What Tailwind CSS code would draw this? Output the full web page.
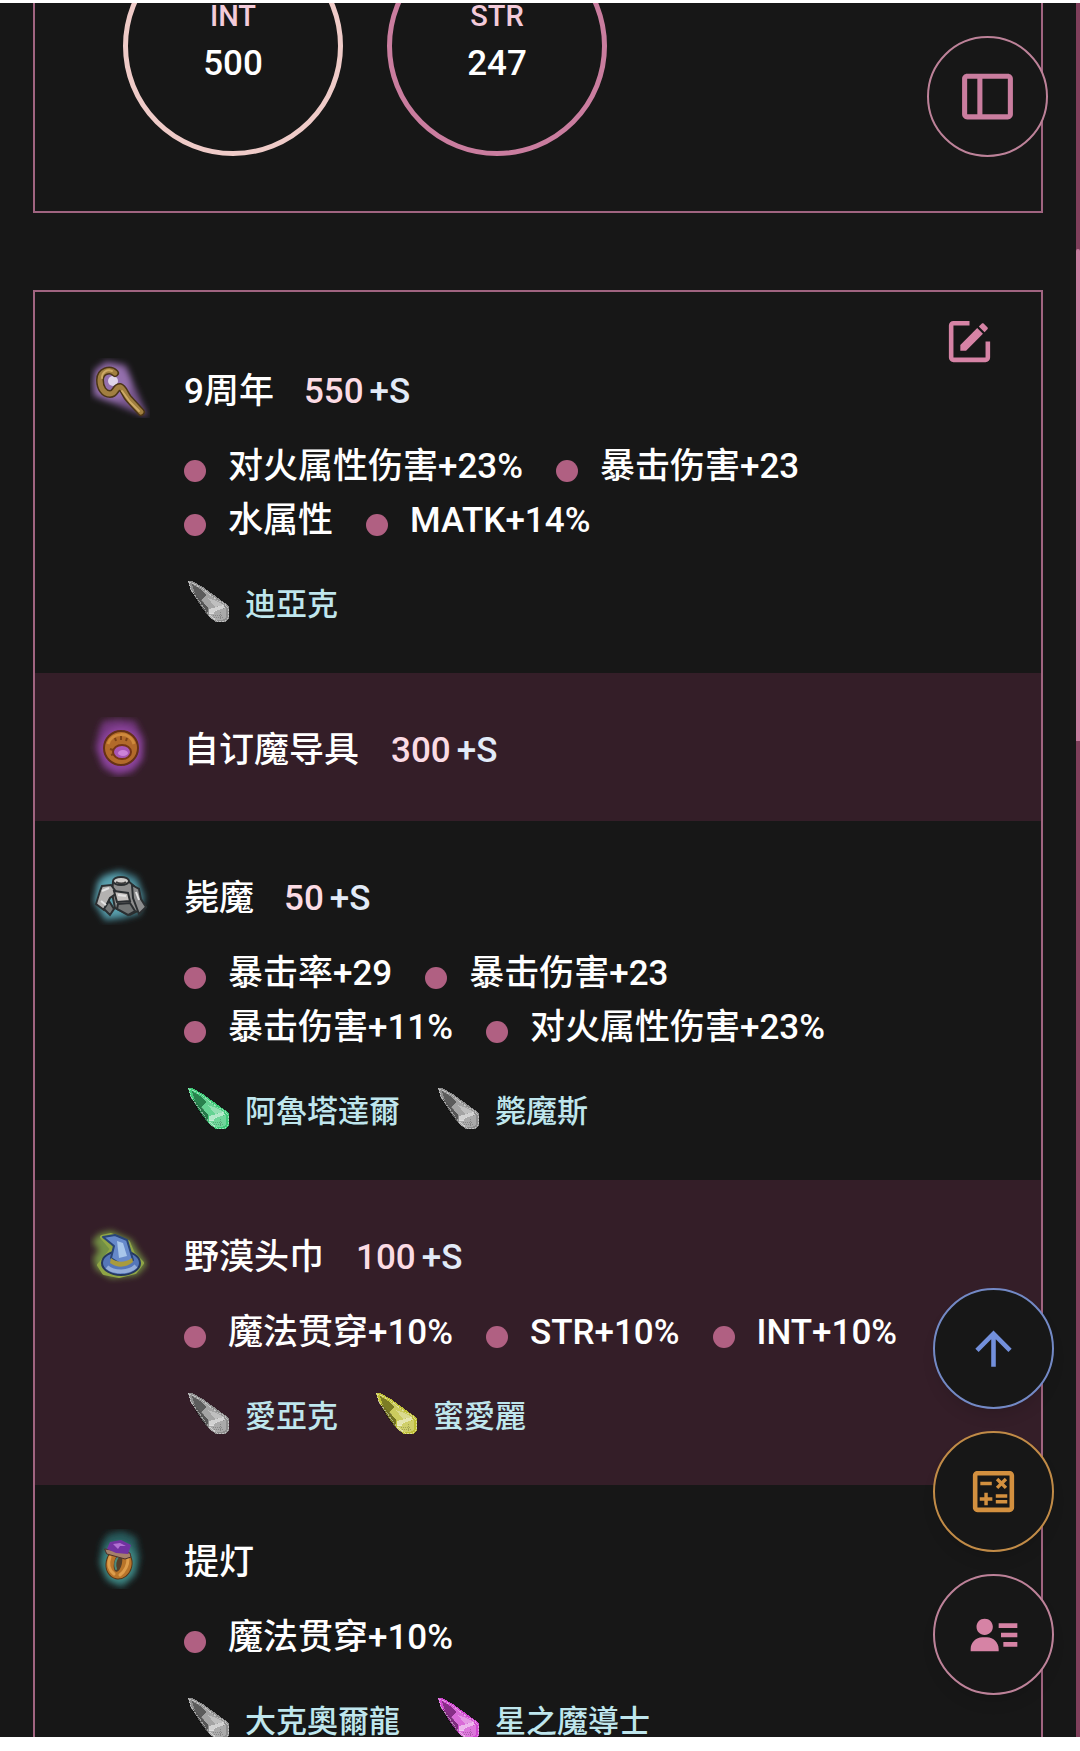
<!DOCTYPE html>
<html lang="zh-CN">
<head>
  <meta charset="UTF-8">
  <meta name="viewport" content="width=device-width, initial-scale=1.0">
  <title>角色配置</title>
  <script src="https://cdn.jsdelivr.net/npm/@tailwindcss/browser@4"></script>
</head>
<body class="h-screen overflow-hidden bg-white font-['Roboto','Noto_Sans_CJK_SC',sans-serif] font-medium text-white">

  <!-- Shared drawings -->
  <svg class="absolute size-0" aria-hidden="true">
    <defs>
      <filter id="glow" x="-30%" y="-30%" width="160%" height="160%"><feGaussianBlur stdDeviation="3"/></filter>
      <filter id="soft"><feGaussianBlur stdDeviation="0.6"/></filter>
      <symbol id="gem" viewBox="0 0 41 41">
        <g shape-rendering="crispEdges">
          <path d="M0 0h4l11 6 15 11 7 5 4 4v12l-4 3h-9l-9-7-7-10L3 9z" fill="currentColor"/>
          <path d="M4 3l8 5 6 6-4 5-7-6z" fill="#000" opacity=".35"/>
          <path d="M5 11l8 7 7 9v8l-6-7-6-9z" fill="#000" opacity=".4"/>
          <path d="M13 8l8 5 9 7 7 4-16 4-8-9 5-5z" fill="#fff" opacity=".2"/>
          <path d="M20 17l8 3 8 4-9 2z" fill="#fff" opacity=".3"/>
          <path d="M21 28l15-4 1 3-10 3-1 3h-5z" fill="#fff" opacity=".6"/>
          <path d="M26 30l12-3v10l-4 2H24l-3-4v-3h5z" fill="#fff" opacity=".25"/>
          <path d="M25 34h9M26 36h9M32 31v7" stroke="#000" opacity=".2" stroke-dasharray="1 1"/>
          <path d="M1 1l3 1 11 6 14 11 8 4 3 4v10l-3 3h-8l-9-7-7-10L3 9z" fill="none" stroke="#fff" opacity=".45" stroke-dasharray="2 1"/>
        </g>
      </symbol>
    </defs>
  </svg>

  <div class="flex h-full flex-col pt-[3px] pb-[14px]">
    <div class="flex min-h-0 flex-1 bg-[#171717]">
      <main class="min-w-0 flex-1 overflow-hidden px-[33px]">

        <!-- Stats -->
        <section class="flex h-[210px] items-end gap-11 overflow-hidden border-2 border-t-0 border-[#a06480] px-[88px] pb-[55px]">
          <div class="flex size-[220px] shrink-0 flex-col items-center justify-center gap-3 rounded-full border-5 border-[#efcbc8]">
            <span class="text-[29px] leading-6 text-[#f3cbda]">INT</span>
            <span class="text-[35px] leading-12">500</span>
          </div>
          <div class="flex size-[220px] shrink-0 flex-col items-center justify-center gap-3 rounded-full border-5 border-[#ca7d9f]">
            <span class="text-[29px] leading-6 text-[#f3cbda]">STR</span>
            <span class="text-[35px] leading-12">247</span>
          </div>
        </section>

        <!-- Equipment -->
        <section class="relative mt-[77px] border-2 border-[#a06480] pt-[22px]">
          <button aria-label="编辑" class="absolute top-[22px] right-11 text-[#d683a5]">
            <svg class="size-[55px]" viewBox="0 0 24 24" fill="currentColor"><path d="M5,3C3.89,3 3,3.89 3,5V19A2,2 0 0,0 5,21H19A2,2 0 0,0 21,19V12H19V19H5V5H12V3H5M17.78,4C17.61,4 17.43,4.07 17.3,4.2L16.08,5.41L18.58,7.91L19.8,6.7C20.06,6.44 20.06,6 19.8,5.75L18.25,4.2C18.12,4.07 17.95,4 17.78,4M15.37,6.12L8,13.5V16H10.5L17.87,8.62L15.37,6.12Z"/></svg>
          </button>

          <ul>
            <!-- Staff -->
            <li class="flex gap-[34px] pt-11 pr-[88px] pb-[46px] pl-[55px]">
              <svg class="size-[60px] shrink-0" viewBox="0 0 60 60" fill="none" stroke-linecap="round" stroke-linejoin="round">
                <g filter="url(#glow)">
                  <path d="M4 12L16 3l20 4 8 20 14 32-18-7-20-8L3 38z" fill="#79578f"/>
                  <ellipse cx="22" cy="25" rx="19" ry="18" fill="#9470ad"/>
                </g>
                <g filter="url(#soft)">
                  <circle cx="23" cy="23" r="5" fill="#dfd5e9"/>
                  <path d="M25 15c-5-5-15-2-15 7 0 8 4 14 10 14 6 0 5-7 10-7 4 1 5 8 9 12l12 13" stroke="#4b3518" stroke-width="8"/>
                  <path d="M25 15c-5-5-15-2-15 7 0 8 4 14 10 14 6 0 5-7 10-7 4 1 5 8 9 12l12 13" stroke="#a17f3f" stroke-width="5"/>
                  <path d="M22 13c-5-2-10 1-10 7M32 33l8 11 9 9" stroke="#cdaa65" stroke-width="2"/>
                </g>
              </svg>
              <div class="min-w-0 flex-1">
                <h2 class="flex h-[60px] items-center pt-2 text-[35px] leading-[52px]">9周年<span class="ml-[30px] text-[#fbdbe4]">550</span><span class="ml-[6px] text-[#e2ebf8]">+S</span></h2>
                <ul class="mt-[22px] flex flex-wrap gap-x-[33px] text-[35px] leading-[54px]">
                  <li class="flex items-center gap-[22px]"><i class="mt-2 size-[22px] rounded-full bg-[#b06082]"></i>对火属性伤害+23%</li>
                  <li class="flex items-center gap-[22px]"><i class="mt-2 size-[22px] rounded-full bg-[#b06082]"></i>暴击伤害+23</li>
                  <li class="flex items-center gap-[22px]"><i class="mt-2 size-[22px] rounded-full bg-[#b06082]"></i>水属性</li>
                  <li class="flex items-center gap-[22px]"><i class="mt-2 size-[22px] rounded-full bg-[#b06082]"></i>MATK+14%</li>
                </ul>
                <ul class="mt-[28px] flex flex-wrap gap-x-[34px] font-['Noto_Sans_CJK_TC',sans-serif] text-[31px] leading-[51px] text-[#bfe6ed]">
                  <li class="flex items-center gap-2"><svg class="mr-1 box-content size-[41px] px-1 text-[#8e8e8e]"><use href="#gem"/></svg>迪亞克</li>
                </ul>
              </div>
            </li>

            <!-- Magic device -->
            <li class="flex gap-[34px] bg-[#341e28] py-11 pr-[88px] pl-[55px]">
              <svg class="size-[60px] shrink-0" viewBox="0 0 60 60" fill="none">
                <g filter="url(#glow)">
                  <path d="M13 4l15-2 17 2 9 18-1 21-10 12-16 4-14-8-8-20 4-18z" fill="#70367a"/>
                  <ellipse cx="31" cy="32" rx="21" ry="22" fill="#8d459e"/>
                </g>
                <g filter="url(#soft)">
                  <circle cx="31" cy="31" r="17" fill="#b26b29" stroke="#663014" stroke-width="2"/>
                  <path d="M18 27c4-12 22-13 26 0" stroke="#cf8a3c" stroke-width="3"/>
                  <path d="M25 21l1 3M31 19v4M37 21l-1 3M20 32l3 1M21 38l3-1" stroke="#7c4315" stroke-width="2"/>
                  <ellipse cx="32" cy="35" rx="9" ry="7" fill="#a856b5" stroke="#763615" stroke-width="2"/>
                  <ellipse cx="33" cy="36" rx="5" ry="3" fill="#cc83d8"/>
                </g>
              </svg>
              <h2 class="flex h-[60px] items-center pt-2 text-[35px] leading-[52px]">自订魔导具<span class="ml-8 text-[#fbdbe4]">300</span><span class="ml-[6px] text-[#e2ebf8]">+S</span></h2>
            </li>

            <!-- Armor -->
            <li class="flex gap-[34px] pt-11 pr-[88px] pb-[46px] pl-[55px]">
              <svg class="size-[60px] shrink-0" viewBox="0 0 60 60" fill="none">
                <g filter="url(#glow)">
                  <path d="M13 10l17-5 17 7 8 20-5 17-18 5-17 2L3 37l4-20z" fill="#3f7885"/>
                  <path d="M9 17l14-8 24 11 3 26-33 6-11-16z" fill="#5aa0ae"/>
                </g>
                <g filter="url(#soft)" stroke="#2b2f30" stroke-width="2">
                  <path d="M23 17l14-2 7 6 6 24-10 5-15-7-3-15z" fill="#8f8f8f"/>
                  <path d="M12 21l9-1 6 8-7 5-6 12-8-6 4-13z" fill="#b4b2b1"/>
                  <path d="M42 20l7 4 2 10 5 8-7 7-6-16z" fill="#8c8d8e"/>
                  <path d="M24 26l14 2 2 8-13 1z" fill="#c4c1bf"/>
                  <path d="M28 39l12-1 5 8-7 4-11-6zM19 36l5 8-4 6-6-6z" fill="#727475"/>
                  <ellipse cx="31" cy="16" rx="8" ry="4" fill="#d2cfcd"/>
                </g>
                <path d="M12 26l7-3M11 36l5 4M28 30l8 1M46 27l3 8" stroke="#e3e3e3" stroke-width="2" filter="url(#soft)"/>
                <path d="M26 17c3 2 8 2 10 0" stroke="#3c3c3c" stroke-width="2" filter="url(#soft)"/>
              </svg>
              <div class="min-w-0 flex-1">
                <h2 class="flex h-[60px] items-center pt-2 text-[35px] leading-[52px]">毙魔<span class="ml-[30px] text-[#fbdbe4]">50</span><span class="ml-[6px] text-[#e2ebf8]">+S</span></h2>
                <ul class="mt-[22px] flex flex-wrap gap-x-[33px] text-[35px] leading-[54px]">
                  <li class="flex items-center gap-[22px]"><i class="mt-2 size-[22px] rounded-full bg-[#b06082]"></i>暴击率+29</li>
                  <li class="flex items-center gap-[22px]"><i class="mt-2 size-[22px] rounded-full bg-[#b06082]"></i>暴击伤害+23</li>
                  <li class="flex items-center gap-[22px]"><i class="mt-2 size-[22px] rounded-full bg-[#b06082]"></i>暴击伤害+11%</li>
                  <li class="flex items-center gap-[22px]"><i class="mt-2 size-[22px] rounded-full bg-[#b06082]"></i>对火属性伤害+23%</li>
                </ul>
                <ul class="mt-[28px] flex flex-wrap gap-x-[34px] font-['Noto_Sans_CJK_TC',sans-serif] text-[31px] leading-[51px] text-[#bfe6ed]">
                  <li class="flex items-center gap-2"><svg class="mr-1 box-content size-[41px] px-1 text-[#3fc878]"><use href="#gem"/></svg>阿魯塔達爾</li>
                  <li class="flex items-center gap-2"><svg class="mr-1 box-content size-[41px] px-1 text-[#8e8e8e]"><use href="#gem"/></svg>斃魔斯</li>
                </ul>
              </div>
            </li>

            <!-- Hat -->
            <li class="flex gap-[34px] bg-[#341e28] pt-11 pr-[88px] pb-[46px] pl-[55px]">
              <svg class="size-[60px] shrink-0" viewBox="0 0 60 60" fill="none" stroke-linejoin="round">
                <path d="M9 10l12-3 20 9 7 12 9 12-10 11-26 3-15-9-3-11 6-8-7-8z" fill="#739044" filter="url(#glow)"/>
                <g filter="url(#soft)">
                  <path d="M12 13l9-2 17 7 5 12 9 9-7 9-16 4-15-3-5-8 8-9 5-7z" stroke="#8fa545" stroke-width="4"/>
                  <ellipse cx="31" cy="39" rx="19" ry="12" fill="#5576b9" stroke="#25375f" stroke-width="2"/>
                  <path d="M21 34l3-12-11-9 12-2 12 5 6 20-11 5z" fill="#6689ca" stroke="#294477" stroke-width="2"/>
                  <path d="M27 17l6 2 4 13-8 2z" fill="#a8c6ea"/>
                  <path d="M21 34c6 5 14 5 21 0l1 4c-7 6-16 6-23 1z" fill="#a99b3e"/>
                  <path d="M17 43c7 6 22 6 29-1" stroke="#93acd9" stroke-width="4"/>
                </g>
              </svg>
              <div class="min-w-0 flex-1">
                <h2 class="flex h-[60px] items-center pt-2 text-[35px] leading-[52px]">野漠头巾<span class="ml-8 text-[#fbdbe4]">100</span><span class="ml-[6px] text-[#e2ebf8]">+S</span></h2>
                <ul class="mt-[22px] flex flex-wrap gap-x-[33px] text-[35px] leading-[54px]">
                  <li class="flex items-center gap-[22px]"><i class="mt-2 size-[22px] rounded-full bg-[#b06082]"></i>魔法贯穿+10%</li>
                  <li class="flex items-center gap-[22px]"><i class="mt-2 size-[22px] rounded-full bg-[#b06082]"></i>STR+10%</li>
                  <li class="flex items-center gap-[22px]"><i class="mt-2 size-[22px] rounded-full bg-[#b06082]"></i>INT+10%</li>
                </ul>
                <ul class="mt-[28px] flex flex-wrap gap-x-[34px] font-['Noto_Sans_CJK_TC',sans-serif] text-[31px] leading-[51px] text-[#bfe6ed]">
                  <li class="flex items-center gap-2"><svg class="mr-1 box-content size-[41px] px-1 text-[#8e8e8e]"><use href="#gem"/></svg>愛亞克</li>
                  <li class="flex items-center gap-2"><svg class="mr-1 box-content size-[41px] px-1 text-[#bfbf38]"><use href="#gem"/></svg>蜜愛麗</li>
                </ul>
              </div>
            </li>

            <!-- Ring -->
            <li class="flex gap-[34px] pt-11 pr-[88px] pb-[46px] pl-[55px]">
              <svg class="size-[60px] shrink-0" viewBox="0 0 60 60" fill="none" stroke-linecap="round">
                <g filter="url(#glow)">
                  <path d="M18 5l14-3 14 6 4 20-4 18-14 13-15-7-8-18 3-20z" fill="#28585a"/>
                  <ellipse cx="29" cy="34" rx="17" ry="20" fill="#3f8884"/>
                </g>
                <g filter="url(#soft)">
                  <ellipse cx="29" cy="35" rx="13" ry="15" transform="rotate(12 29 35)" fill="#b8742c" stroke="#5a3413" stroke-width="1"/>
                  <ellipse cx="28" cy="34" rx="4" ry="9" transform="rotate(12 28 34)" fill="#54402a"/>
                  <path d="M28 28c-3 4-3 9-2 12" stroke="#4d8b7c" stroke-width="2"/>
                  <path d="M20 28c-3 8 0 14 4 17M38 30c0 7-3 12-8 16" stroke="#de9e4c" stroke-width="3"/>
                  <path d="M15 20l25 4 1 4-6 2-18-5z" fill="#a5806a" stroke="#4b3029"/>
                  <path d="M20 13l11-2 10 5-3 9-12-1-9-4z" fill="#7231a1"/>
                  <path d="M23 15l7-1 6 3h-6l-2 3z" fill="#b070d2"/>
                </g>
              </svg>
              <div class="min-w-0 flex-1">
                <h2 class="flex h-[60px] items-center pt-2 text-[35px] leading-[52px]">提灯</h2>
                <ul class="mt-[22px] flex flex-wrap gap-x-[33px] text-[35px] leading-[54px]">
                  <li class="flex items-center gap-[22px]"><i class="mt-2 size-[22px] rounded-full bg-[#b06082]"></i>魔法贯穿+10%</li>
                </ul>
                <ul class="mt-[28px] flex flex-wrap gap-x-[34px] font-['Noto_Sans_CJK_TC',sans-serif] text-[31px] leading-[51px] text-[#bfe6ed]">
                  <li class="flex items-center gap-2"><svg class="mr-1 box-content size-[41px] px-1 text-[#8e8e8e]"><use href="#gem"/></svg>大克奧爾龍</li>
                  <li class="flex items-center gap-2"><svg class="mr-1 box-content size-[41px] px-1 text-[#d048cf]"><use href="#gem"/></svg>星之魔導士</li>
                </ul>
              </div>
            </li>
          </ul>
        </section>
      </main>

      <!-- Scrollbar -->
      <div class="w-1 shrink-0 bg-[#803f5b] pt-[246px]">
        <div class="h-[492px] rounded-t-xs bg-[#ca7d9f]"></div>
      </div>
    </div>
  </div>

  <button aria-label="侧栏" class="fixed top-9 right-8 flex size-[121px] items-center justify-center rounded-full border-2 border-[#bd8299] bg-[#171717] text-[#ca7d9f]">
    <svg class="size-[61px]" viewBox="0 0 24 24" fill="currentColor"><path d="M20 3H4c-1.103 0-2 .897-2 2v14c0 1.103.897 2 2 2h16c1.103 0 2-.897 2-2V5c0-1.103-.897-2-2-2zM4 19V5h4v14H4zm16 0H10V5h10v14z"/></svg>
  </button>

  <nav class="fixed right-[26px] bottom-14 flex flex-col gap-[22px]">
    <button aria-label="返回顶部" class="flex size-[121px] items-center justify-center rounded-full border-2 border-[#7389c5] bg-[#171717] text-[#7390dc] shadow-lg">
      <svg class="size-[55px]" viewBox="0 0 24 24" fill="currentColor"><path d="M13,20H11V8L5.5,13.5L4.08,12.08L12,4.16L19.92,12.08L18.5,13.5L13,8V20Z"/></svg>
    </button>
    <button aria-label="计算" class="flex size-[121px] items-center justify-center rounded-full border-2 border-[#c18b47] bg-[#171717] text-[#d3903f] shadow-lg">
      <svg class="size-[55px]" viewBox="0 0 24 24" fill="currentColor"><path d="M19 3H5c-1.1 0-2 .9-2 2v14c0 1.1.9 2 2 2h14c1.1 0 2-.9 2-2V5c0-1.1-.9-2-2-2zm0 16H5V5h14v14z"/><path d="M6.25 7.72h5v1.5h-5zM13 15.75h5v1.5h-5zM13 13.25h5v1.5h-5zM8 18h1.5v-2h2v-1.5h-2v-2H8v2H6V16h2zM14.09 10.95l1.41-1.41 1.41 1.41 1.06-1.06-1.41-1.42 1.41-1.41L16.91 6 15.5 7.41 14.09 6l-1.06 1.06 1.41 1.41-1.41 1.42z"/></svg>
    </button>
    <button aria-label="角色" class="flex size-[121px] items-center justify-center rounded-full border-2 border-[#bd8299] bg-[#171717] text-[#d683a5] shadow-lg">
      <svg class="size-[56px]" viewBox="0 0 24 24" fill="currentColor"><path d="M15 11h7v2h-7zm1 4h6v2h-6zm-2-8h8v2h-8zM4 19h10v-1c0-2.757-2.243-5-5-5H7c-2.757 0-5 2.243-5 5v1h2zm4-7c1.995 0 3.5-1.505 3.5-3.5S9.995 5 8 5 4.5 6.505 4.5 8.5 6.005 12 8 12z"/></svg>
    </button>
  </nav>
</body>
</html>
